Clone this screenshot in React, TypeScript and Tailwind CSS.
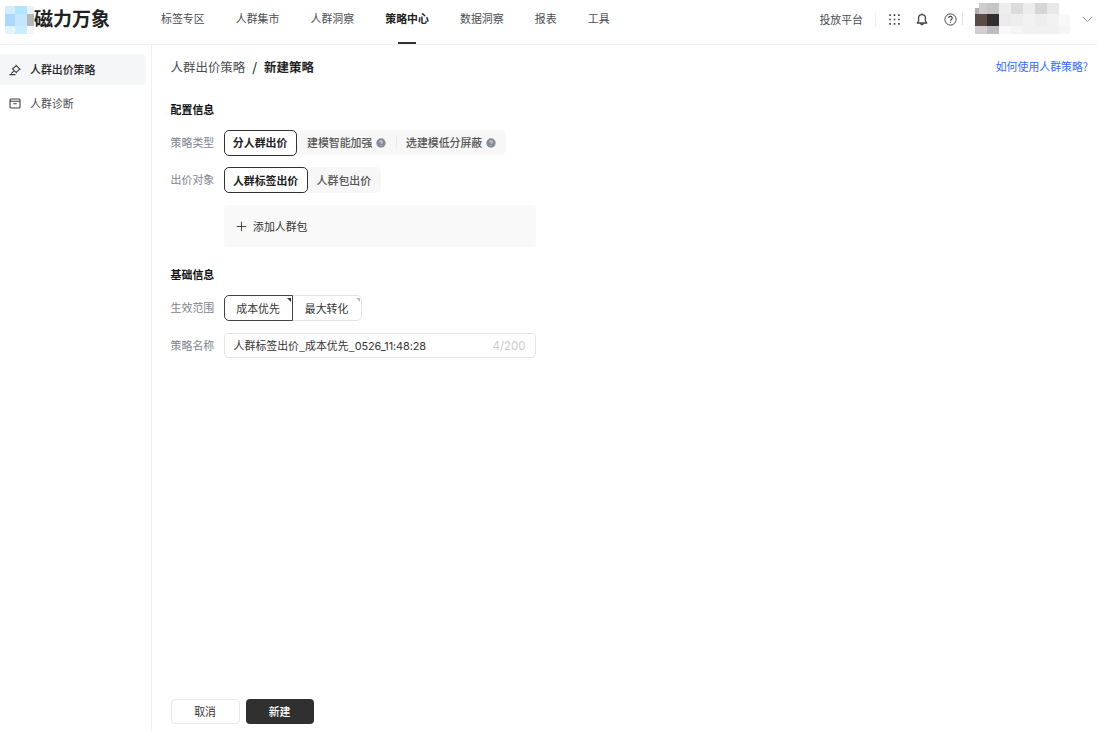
import { ReactNode } from "react"

const NAV_ITEMS = [
	"标签专区",
	"人群集市",
	"人群洞察",
	"策略中心",
	"数据洞察",
	"报表",
	"工具",
]

/** Small filled question mark shown after an option label */
function HelpDot() {
	return (
		<svg width="10" height="10" viewBox="0 0 10 10" fill="none">
			<circle cx="5" cy="5" r="4.7" fill="#868d9a" />
			<path
				d="M3.8 4.1a1.2 1.2 0 1 1 1.8 1c-.4.25-.6.4-.6.8M5 7v.6"
				stroke="#fff"
				strokeWidth="0.8"
			/>
		</svg>
	)
}

/** Pixelated placeholder that hides the product logo */
function LogoMosaic() {
	return (
		<svg
			width="29"
			height="28"
			viewBox="0 0 29 28"
			shapeRendering="crispEdges"
		>
			<rect width="10" height="8" fill="#d4ecfe" />
			<rect x="10" width="12" height="8" fill="#b0e7fe" />
			<rect x="22" width="7" height="8" fill="#e8f3f6" />
			<rect y="8" width="10" height="12" fill="#acd7fe" />
			<rect x="10" y="8" width="12" height="12" fill="#c3e7fe" />
			<rect x="22" y="8" width="7" height="12" fill="#b5b8ba" />
			<rect y="20" width="10" height="8" fill="#e3f4fe" />
			<rect x="10" y="20" width="12" height="8" fill="#caedfe" />
			<rect x="22" y="20" width="7" height="8" fill="#f5f8f9" />
		</svg>
	)
}

/** Pixelated placeholder that hides the account name */
function AccountMosaic() {
	return (
		<svg
			width="95"
			height="31"
			viewBox="0 0 95 31"
			shapeRendering="crispEdges"
		>
			<rect y="5" width="4" height="6" fill="#b0b0b0" />
			<rect x="4" width="8" height="11" fill="#cdcdcd" />
			<rect x="12" width="12" height="11" fill="#c5c5c4" />
			<rect x="24" width="12" height="11" fill="#ededed" />
			<rect x="36" width="12" height="11" fill="#dcdcdc" />
			<rect x="48" width="12" height="11" fill="#ececec" />
			<rect x="60" width="12" height="11" fill="#d6d6d6" />
			<rect x="72" width="12" height="11" fill="#e8e8e8" />
			<rect y="11" width="12" height="12" fill="#5a4b49" />
			<rect x="12" y="11" width="12" height="12" fill="#332e30" />
			<rect x="24" y="11" width="12" height="12" fill="#ebebeb" />
			<rect x="36" y="11" width="12" height="12" fill="#eeeeee" />
			<rect x="48" y="11" width="12" height="12" fill="#f2f2f2" />
			<rect x="60" y="11" width="12" height="12" fill="#eeeeee" />
			<rect x="72" y="11" width="12" height="12" fill="#f2f2f2" />
			<rect x="84" y="11" width="11" height="12" fill="#f8f8f8" />
			<rect y="23" width="12" height="8" fill="#cfcfcf" />
			<rect x="12" y="23" width="12" height="8" fill="#bbbbc0" />
			<rect x="24" y="23" width="12" height="8" fill="#f9f9f9" />
			<rect x="36" y="23" width="12" height="8" fill="#f5f5f5" />
			<rect x="48" y="23" width="36" height="8" fill="#f1f1f1" />
			<rect x="84" y="23" width="11" height="8" fill="#f5f5f5" />
		</svg>
	)
}

function Header() {
	return (
		<header className="flex h-[45px] shrink-0 border-b border-[#efeff0] text-[#4b4c50]">
			<div className="flex w-[161px] shrink-0 items-start pl-[5px] pt-[6px]">
				<LogoMosaic />
				<span className="text-[19px] font-bold leading-[24px] text-[#222]">
					磁力万象
				</span>
			</div>

			<nav className="flex gap-[31.2px]">
				{NAV_ITEMS.map((item) => (
					<div
						key={item}
						className={
							item === "策略中心"
								? "relative leading-[37px] font-bold text-[#222]"
								: "leading-[37px]"
						}
					>
						{item}
						{item === "策略中心" && (
							<div className="absolute left-[12.5px] top-[42px] h-[2px] w-[18.5px] bg-[#333]" />
						)}
					</div>
				))}
			</nav>

			<div className="ml-auto flex h-[38px] items-center pr-[4px]">
				<span className="pb-px">投放平台</span>
				<div className="ml-[12px] h-[15px] w-px bg-[#eeeeef]" />
				<svg
					className="ml-[13px]"
					width="11"
					height="11"
					viewBox="0 0 11 11"
					fill="#3d3d44"
				>
					<path d="M.3.3h1.6v1.6H.3zM4.7.3h1.6v1.6H4.7zM9.1.3h1.6v1.6H9.1zM.3 4.7h1.6v1.6H.3zM4.7 4.7h1.6v1.6H4.7zM9.1 4.7h1.6v1.6H9.1zM.3 9.1h1.6v1.6H.3zM4.7 9.1h1.6v1.6H4.7zM9.1 9.1h1.6v1.6H9.1z" />
				</svg>
				<svg
					className="ml-[16px]"
					width="12"
					height="13"
					viewBox="0 0 12 13"
					fill="none"
					stroke="#444"
					strokeWidth="1.3"
					strokeLinejoin="round"
				>
					<path d="M6 .4v1.2M2.6 8V5.1a3.4 3.4 0 0 1 6.8 0V8l1.4 2H1.2zM4.6 10.3c.2 1.9 2.6 1.9 2.8 0" />
				</svg>
				<svg
					className="ml-[16px]"
					width="13"
					height="13"
					viewBox="0 0 13 13"
					fill="none"
					stroke="#444"
				>
					<circle cx="6.5" cy="6.5" r="5.6" />
					<path
						d="M4.8 5.1a1.7 1.7 0 1 1 2.6 1.4c-.6.4-.9.6-.9 1.3M6.5 8.7v1.1"
						strokeWidth="1.2"
					/>
				</svg>
				<div className="ml-[5px] h-[12px] w-[1px] bg-[#dfdfdf]" />
				<div className="ml-[12px] pb-[2px]">
					<AccountMosaic />
				</div>
				<svg
					className="ml-[12px]"
					width="11"
					height="7"
					viewBox="0 0 11 7"
					fill="none"
					stroke="#888"
				>
					<path d="M.8 1 5.5 5.7 10.2 1" />
				</svg>
			</div>
		</header>
	)
}

function Sidebar() {
	return (
		<aside className="flex w-[152px] shrink-0 flex-col gap-[3px] border-r border-[#f0f0f1] pt-[9px]">
			<div className="flex h-[31px] w-[146px] items-center gap-[9px] rounded-r-[5px] bg-[#f5f6f8] pl-[9px] font-medium text-[#222]">
				<svg
					width="12"
					height="12"
					viewBox="0 0 12 12"
					fill="none"
					stroke="#3c3f45"
					strokeWidth="1.1"
				>
					<path d="M.5 10.6h6M6.6.8l4.8 4.8M3 4.3l4.8 4.8M3.6 4.9l3.9-3.4M7.2 8.4l3.6-3.5M5 6.9 2.1 9.6" />
				</svg>
				<span className="pb-[2px]">人群出价策略</span>
			</div>
			<div className="flex h-[31px] w-[146px] items-center gap-[9px] pl-[9px] text-[#4b4c50]">
				<svg
					width="12"
					height="11"
					viewBox="0 0 12 11"
					fill="none"
					stroke="#3c3f45"
					strokeWidth="1.1"
				>
					<rect x="1" y="1" width="10" height="9" rx="1" />
					<path d="M1 3.3h10M4.3 5.7h3.4" />
				</svg>
				<span className="pb-px">人群诊断</span>
			</div>
		</aside>
	)
}

type FieldRowProps = {
	label: string
	children: ReactNode
}

function FieldRow({ label, children }: FieldRowProps) {
	return (
		<div className="flex items-center">
			<div className="w-[53px] shrink-0 pb-[2px] text-[#7d838d]">{label}</div>
			{children}
		</div>
	)
}

export default function App() {
	return (
		<div className="flex h-[731px] w-[1097px] flex-col overflow-hidden whitespace-nowrap bg-white font-['Noto_Sans_CJK_SC',sans-serif] text-[10.9px] leading-[16px]">
			<Header />

			<div className="flex min-h-0 flex-1">
				<Sidebar />

				<main className="flex flex-1 flex-col pl-[18.6px] pr-[9px]">
					<div className="mt-[12px] flex h-[20px] items-center justify-between">
						<div className="flex text-[12.45px] text-[#4b4c50]">
							<span>人群出价策略</span>
							<span className="mx-[7px] font-medium text-[#222]">/</span>
							<span className="font-bold text-[#222]">新建策略</span>
						</div>
						<a className="pb-[2px] text-[#326bfb]">如何使用人群策略?</a>
					</div>

					<h2 className="mt-[24px] font-bold text-[#111]">配置信息</h2>

					<div className="mt-[13px] flex flex-col gap-[12px]">
						<FieldRow label="策略类型">
							<div className="flex h-[25px] items-center rounded-[5px] bg-[#f7f7f7] font-medium text-[#555]">
								<div className="flex h-[26px] w-[73px] items-center justify-center rounded-[5px] border border-[#333] bg-white pb-[2px] font-bold text-[#222]">
									分人群出价
								</div>
								<div className="flex w-[99px] items-center gap-[4px] pl-[10.4px]">
									<span className="pb-[2px]">建模智能加强</span>
									<HelpDot />
								</div>
								<div className="h-[13px] w-px bg-[#ebebeb]" />
								<div className="flex w-[109px] items-center gap-[4px] pl-[9.4px]">
									<span className="pb-[2px]">选建模低分屏蔽</span>
									<HelpDot />
								</div>
							</div>
						</FieldRow>

						<FieldRow label="出价对象">
							<div className="flex h-[26px] items-center rounded-[5px] bg-[#f7f7f7] font-medium text-[#555]">
								<div className="flex h-[26px] w-[84px] items-center justify-center rounded-[5px] border border-[#333] bg-white font-bold text-[#222]">
									人群标签出价
								</div>
								<div className="w-[73px] pl-[9px]">人群包出价</div>
							</div>
						</FieldRow>
					</div>

					<div className="ml-[53px] mt-[12px] flex h-[42px] w-[312px] items-center gap-[6.4px] rounded-[4px] bg-[#f9f9f9] pl-[12px] text-[#333]">
						<svg
							width="11"
							height="11"
							viewBox="0 0 11 11"
							stroke="#444"
						>
							<path d="M5.5.8v9.4M.8 5.5h9.4" />
						</svg>
						添加人群包
					</div>

					<h2 className="mt-[19px] font-bold text-[#111]">基础信息</h2>

					<div className="mt-[13px] flex flex-col gap-[12px]">
						<FieldRow label="生效范围">
							<div className="flex h-[26px] text-[#333]">
								<div className="relative flex w-[69px] items-center justify-center rounded-l-[5px] border border-[#444]">
									成本优先
									<svg
										className="absolute right-[1px] top-[2px]"
										width="4"
										height="4"
										viewBox="0 0 4 4"
									>
										<path d="M0 0h4v4z" fill="#333" />
									</svg>
								</div>
								<div className="relative flex w-[69px] items-center justify-center rounded-r-[5px] border border-l-0 border-[#e4e4e5]">
									最大转化
									<svg
										className="absolute right-[1px] top-[2px]"
										width="4"
										height="4"
										viewBox="0 0 4 4"
									>
										<path d="M0 0h4v4z" fill="#bbb" />
									</svg>
								</div>
							</div>
						</FieldRow>

						<FieldRow label="策略名称">
							<div className="flex h-[25px] w-[312px] items-center justify-between rounded-[4px] border border-[#e4e4e5] px-[9px] text-[#333]">
								<span>
									人群标签出价_成本优先_
									<span className="font-[Inter,sans-serif] tracking-[-0.1px]">
										0526_11:48:28
									</span>
								</span>
								<span className="font-[Inter,sans-serif] text-[11.5px] text-[#ccc]">
									4/200
								</span>
							</div>
						</FieldRow>
					</div>

					<div className="mb-[7px] mt-auto flex gap-[6px]">
						<button className="h-[25px] w-[69px] rounded-[4px] border border-[#e8e8e9] pb-px text-[#333]">
							取消
						</button>
						<button className="h-[25px] w-[68px] rounded-[4px] bg-[#303030] pb-px font-medium text-white">
							新建
						</button>
					</div>
				</main>
			</div>
		</div>
	)
}
